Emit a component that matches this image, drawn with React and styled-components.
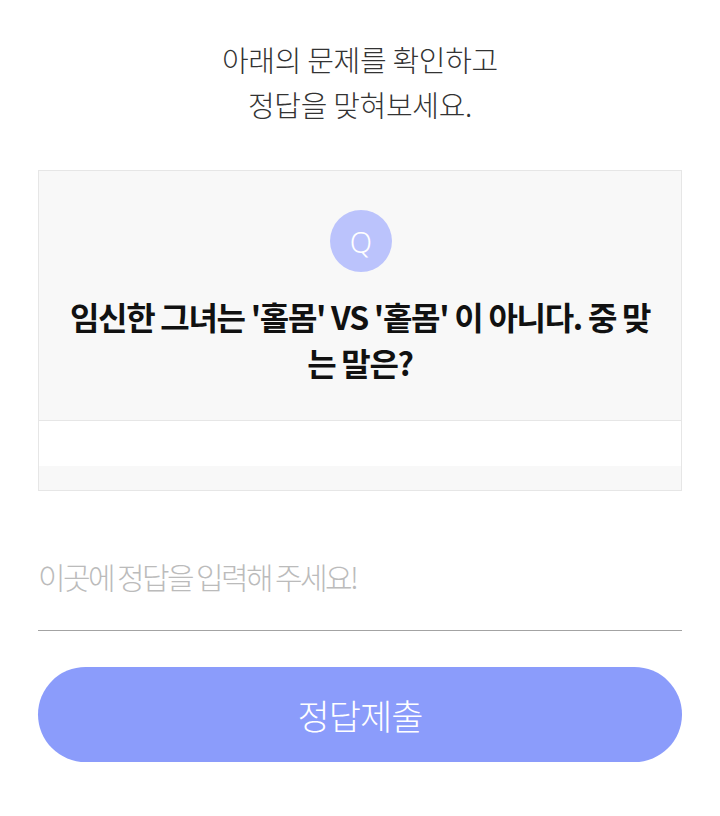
import styled, { createGlobalStyle } from 'styled-components';

const GlobalStyle = createGlobalStyle`
  body {
    margin: 0;
    background: #fff;
    font-family: 'Noto Sans CJK KR', 'Noto Sans', sans-serif;
  }
`;

const Page = styled.div`
  width: 720px;
  padding: 37px 38px 0;
  box-sizing: border-box;
`;

const Guide = styled.p`
  margin: 0;
  text-align: center;
  font-size: 29px;
  line-height: 45px;
  font-weight: 300;
  letter-spacing: -0.3px;
  color: #333;
`;

const QuizCard = styled.div`
  margin-top: 43px;
  border: 1px solid #e6e6e6;
  background: #f8f8f8;
`;

const QuestionArea = styled.div`
  display: flex;
  flex-direction: column;
  align-items: center;
  padding: 39px 28px 35px;
  border-bottom: 1px solid #e6e6e6;
`;

const QBadge = styled.div`
  width: 62px;
  height: 62px;
  margin-left: 2px;
  border-radius: 50%;
  background: #bbc3fc;
  color: #fff;
  display: flex;
  align-items: center;
  justify-content: center;
  font-family: 'Noto Sans', sans-serif;
  font-size: 29px;
  font-weight: 300;
`;

const QuestionText = styled.h2`
  margin: 21px 0 0;
  text-align: center;
  font-size: 32px;
  line-height: 46px;
  font-weight: 700;
  letter-spacing: -1.3px;
  word-break: break-all;
  color: #111;
`;

const AnswerSlot = styled.div`
  height: ${(p) => p.$h}px;
  background: ${(p) => p.$bg};
`;

const AnswerInput = styled.input`
  display: block;
  width: 100%;
  box-sizing: border-box;
  margin-top: 50px;
  height: 90px;
  padding: 0 0 20px;
  border: none;
  border-bottom: 1px solid #a3a3a3;
  outline: none;
  background: transparent;
  font-family: inherit;
  font-size: 30px;
  font-weight: 300;
  letter-spacing: -2.6px;
  color: #333;

  &::placeholder {
    color: #bbb;
  }
`;

const SubmitButton = styled.button`
  display: block;
  width: 100%;
  margin-top: 36px;
  height: 95px;
  border: none;
  border-radius: 48px;
  background: #8b9cfb;
  color: #fff;
  font-family: inherit;
  font-size: 35px;
  font-weight: 300;
  letter-spacing: -1px;
  cursor: pointer;
`;

export default function App() {
  return (
    <>
      <GlobalStyle />
      <Page>
        <Guide>
          아래의 문제를 확인하고
          <br />
          정답을 맞혀보세요.
        </Guide>
        <QuizCard>
          <QuestionArea>
            <QBadge>Q</QBadge>
            <QuestionText>임신한 그녀는 '홀몸' VS '홑몸' 이 아니다. 중 맞는 말은?</QuestionText>
          </QuestionArea>
          <AnswerSlot $h={45} $bg="#fff" />
          <AnswerSlot $h={24} $bg="#f8f8f8" />
        </QuizCard>
        <AnswerInput placeholder="이곳에 정답을 입력해 주세요!" />
        <SubmitButton>정답제출</SubmitButton>
      </Page>
    </>
  );
}
